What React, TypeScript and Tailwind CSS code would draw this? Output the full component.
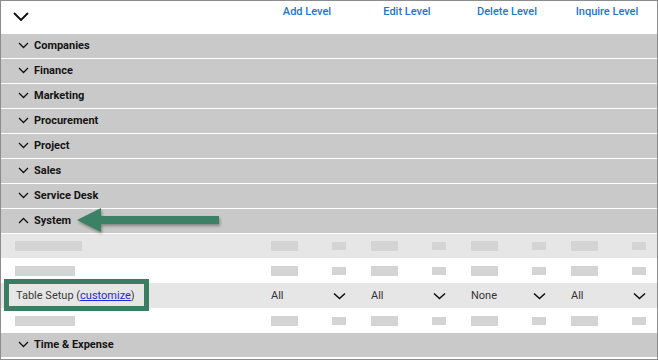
import React from "react";

const groupsTop = ["Companies", "Finance", "Marketing", "Procurement", "Project", "Sales", "Service Desk"];

function Chevron({ up = false }: { up?: boolean }) {
  return (
    <svg width="11" height="7" viewBox="0 0 11 7" className="shrink-0">
      <path
        d={up ? "M1 6 L5.5 1.5 L10 6" : "M1 1 L5.5 5.5 L10 1"}
        fill="none"
        stroke="#111"
        strokeWidth="1.3"
      />
    </svg>
  );
}

function SelChevron() {
  return (
    <svg width="13" height="8" viewBox="0 0 13 8">
      <path d="M1 1.5 L6.5 6.5 L12 1.5" fill="none" stroke="#111" strokeWidth="1.6" />
    </svg>
  );
}

function GroupRow({ label, up = false }: { label: string; up?: boolean }) {
  return (
    <div className="h-[25px] flex items-center bg-[#c9c9c9] border-b border-white pl-[17px] pb-[2px] gap-[5px]">
      <Chevron up={up} />
      <span className="text-[11px] font-bold text-[#151515] leading-[13px]">{label}</span>
    </div>
  );
}

function Cell({ text }: { text?: string }) {
  return (
    <div className="w-[100px] flex items-center pl-[14px]">
      <div className="w-[61px] flex items-center">
        {text ? (
          <span className="text-[11px] text-[#333] leading-[13px]">{text}</span>
        ) : (
          <div className="w-[27px] h-[10px] bg-[#d4d4d4]" />
        )}
      </div>
      <div className="w-[14px] flex items-center justify-center">
        {text ? <SelChevron /> : <div className="w-[14px] h-[8px] bg-[#d4d4d4]" />}
      </div>
    </div>
  );
}

function SubRow({ bg, labelW, h }: { bg: string; labelW: string; h: string }) {
  return (
    <div className={`${h} flex ${bg}`}>
      <div className="w-[256px] flex items-center pl-[14px]">
        <div className={`${labelW} h-[10px] bg-[#d4d4d4]`} />
      </div>
      <Cell />
      <Cell />
      <Cell />
      <Cell />
    </div>
  );
}

export default function App() {
  return (
    <div
      className="relative w-[658px] h-[360px] border border-[#8c8c8c] bg-white overflow-hidden"
      style={{ fontFamily: "Roboto, 'Liberation Sans', sans-serif" }}
    >
      {/* header */}
      <div className="h-[33px] flex bg-white">
        <div className="w-[256px] pl-[12px] pt-[11px]">
          <svg width="16" height="9" viewBox="0 0 16 9">
            <path d="M1 1 L8 8 L15 1" fill="none" stroke="#111" strokeWidth="1.9" />
          </svg>
        </div>
        {["Add Level", "Edit Level", "Delete Level", "Inquire Level"].map((t) => (
          <div key={t} className="w-[100px] flex justify-center pt-[4px]">
            <span className="text-[11px] font-medium text-[#1e74d2] leading-[13px]">{t}</span>
          </div>
        ))}
      </div>

      {groupsTop.map((g) => (
        <GroupRow key={g} label={g} />
      ))}
      <GroupRow label="System" up />

      <SubRow bg="bg-[#e6e6e6]" labelW="w-[67px]" h="h-[24px]" />
      <SubRow bg="bg-white" labelW="w-[60px]" h="h-[25px]" />
      <div className="h-[25px] flex bg-[#e6e6e6]">
        <div className="w-[256px] flex items-center pl-[15px]">
          <span className="text-[11px] text-[#3a3a3a] leading-[13px]">
            Table Setup (<span className="text-[#2424e6] underline">customize</span>)
          </span>
        </div>
        <Cell text="All" />
        <Cell text="All" />
        <Cell text="None" />
        <Cell text="All" />
      </div>
      <SubRow bg="bg-white" labelW="w-[60px]" h="h-[25px]" />

      <GroupRow label="Time & Expense" />

      {/* annotation box */}
      <div className="absolute left-[3px] top-[278px] w-[145px] h-[32px] border-[5px] border-[#3a7d62]" />

      {/* annotation arrow */}
      <svg
        className="absolute left-[75px] top-[205px]"
        width="150"
        height="32"
        viewBox="0 0 150 32"
        style={{ filter: "drop-shadow(1px 2px 1.5px rgba(0,0,0,0.35))" }}
      >
        <polygon points="1,14 25,2 25,10 143,10 143,18 25,18 25,26" fill="#3a8166" />
      </svg>
    </div>
  );
}
